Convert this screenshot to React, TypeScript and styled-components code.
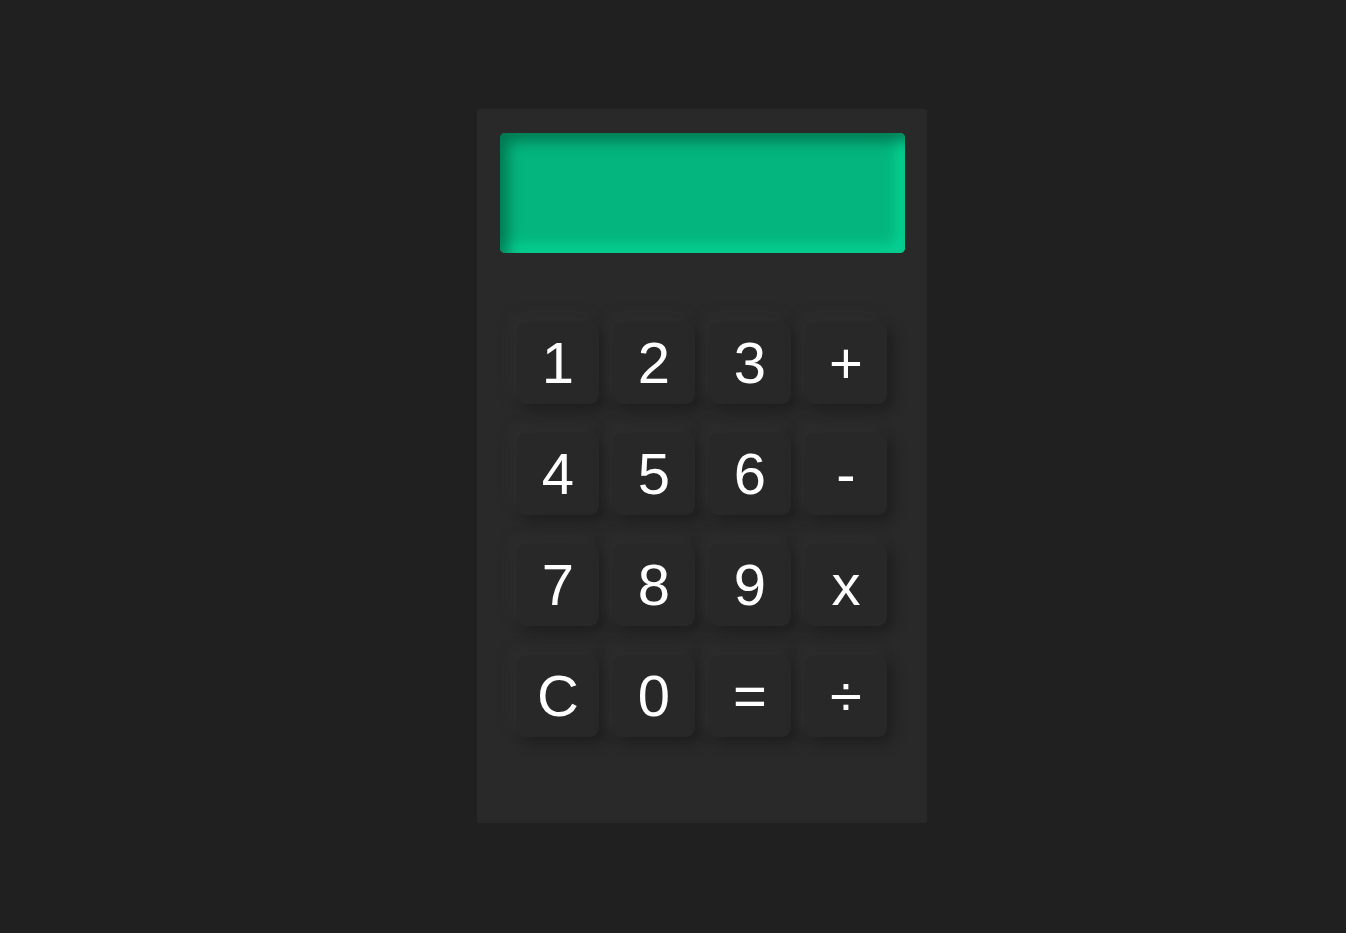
import React from "react";
import styled, { createGlobalStyle } from "styled-components";

const Global = createGlobalStyle`
  html, body { margin: 0; padding: 0; background: #202020; }
  body { font-family: "Liberation Sans", Arial, sans-serif; }
`;

const Page = styled.div`
  min-height: 933px;
  padding-top: 109px;
  padding-left: 477px;
  box-sizing: border-box;
`;

const Calculator = styled.div`
  width: 450px;
  height: 714px;
  background: #292929;
  border-radius: 3px;
  box-sizing: border-box;
  padding: 24px 22px 0 23px;
  display: flex;
  flex-direction: column;
`;

const Display = styled.div`
  height: 120px;
  border-radius: 5px;
  background: #04b57d;
  box-shadow: inset 8px 8px 14px rgba(0, 70, 45, 0.55),
    inset -8px -8px 14px #05d596;
  color: #fff;
  font-size: 48px;
  display: flex;
  align-items: center;
  justify-content: flex-end;
  padding: 0 20px;
`;

const Keys = styled.div`
  margin-top: 69px;
  display: grid;
  grid-template-columns: repeat(4, 82px);
  grid-auto-rows: 82px;
  column-gap: 14px;
  row-gap: 29px;
  margin-left: 17px;
`;

const Key = styled.button`
  border: none;
  border-radius: 9px;
  background: #282828;
  color: #ffffff;
  font-family: "Liberation Sans", Arial, sans-serif;
  font-size: 58px;
  line-height: 1;
  padding: 0;
  display: flex;
  align-items: center;
  justify-content: center;
  box-shadow: 6px 6px 12px #1f1f1f, -6px -6px 12px #2e2e2e;
  cursor: pointer;
`;

const keys = ["1", "2", "3", "+", "4", "5", "6", "-", "7", "8", "9", "x", "C", "0", "=", "÷"];

export default function App() {
  return (
    <>
      <Global />
      <Page>
        <Calculator>
          <Display />
          <Keys>
            {keys.map((k) => (
              <Key key={k}>{k}</Key>
            ))}
          </Keys>
        </Calculator>
      </Page>
    </>
  );
}
